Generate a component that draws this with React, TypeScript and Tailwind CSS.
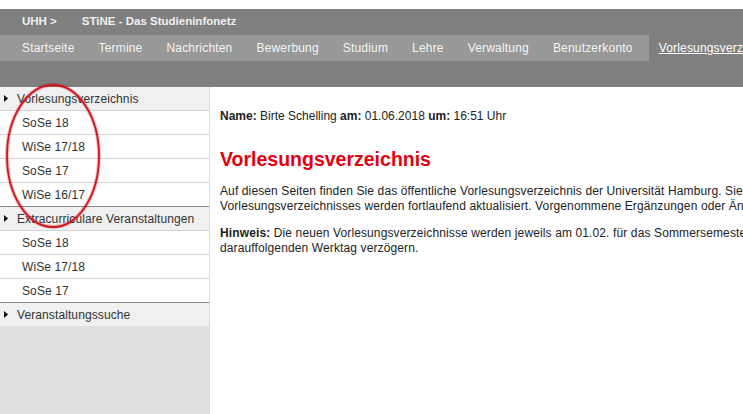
const NAV = [
  "Startseite",
  "Termine",
  "Nachrichten",
  "Bewerbung",
  "Studium",
  "Lehre",
  "Verwaltung",
  "Benutzerkonto",
];

const GROUPS = [
  { label: "Vorlesungsverzeichnis", items: ["SoSe 18", "WiSe 17/18", "SoSe 17", "WiSe 16/17"] },
  { label: "Extracurriculare Veranstaltungen", items: ["SoSe 18", "WiSe 17/18", "SoSe 17"] },
  { label: "Veranstaltungssuche", items: [] as string[] },
];

const Arrow = () => (
  <svg width="4" height="7" viewBox="0 0 4 7" className="shrink-0">
    <polygon points="0,0 4,3.5 0,7" fill="#111" />
  </svg>
);

export default function App() {
  return (
    <div
      className="relative w-full h-[414px] overflow-hidden bg-white flex flex-col text-[12px] text-[#222]"
      style={{ fontFamily: '"Liberation Sans", Arial, sans-serif' }}
    >
      {/* ── Header ─────────────────────────────────────── */}
      <div className="h-[9px] shrink-0 bg-white" />
      <div className="h-[26px] shrink-0 bg-[#808080] flex items-center pl-[22px] text-[11.5px] font-bold text-[#f0f0f0]">
        <span>UHH &gt;</span>
        <span className="ml-[25px]">STiNE - Das Studieninfonetz</span>
      </div>
      <div className="h-[26px] shrink-0 bg-[#808080] flex tracking-[0.18px]">
        <div className="flex bg-[#989898] pl-[10px] pr-[4px]">
          {NAV.map((n) => (
            <span key={n} className="px-3 flex items-center text-[#f4f4f4] whitespace-nowrap">
              {n}
            </span>
          ))}
        </div>
        <span className="ml-[10px] flex items-center text-white underline whitespace-nowrap">
          Vorlesungsverzeichnis
        </span>
      </div>
      <div className="h-[26px] shrink-0 bg-[#808080]" />

      {/* ── Body ───────────────────────────────────────── */}
      <div className="flex flex-1 min-h-0">
        <aside className="w-[210px] shrink-0 flex flex-col border-r border-[#dcdcdc] text-[#333] tracking-[0.1px]">
          {GROUPS.map((g, gi) => (
            <div key={g.label}>
              <div
                className={`flex items-center gap-[9px] pl-[4px] bg-[#f0f0f0] whitespace-nowrap ${
                  gi < GROUPS.length - 1 ? "h-[24px] border-b border-[#d4d4d4]" : "h-[23px]"
                }`}
              >
                <Arrow />
                <span>{g.label}</span>
              </div>
              {g.items.map((it, i) => (
                <div
                  key={it}
                  className={`h-[24px] flex items-center pl-[22px] bg-white border-b ${
                    i === g.items.length - 1 ? "border-[#8c8c8c]" : "border-[#d4d4d4]"
                  }`}
                >
                  {it}
                </div>
              ))}
            </div>
          ))}
          <div className="flex-1 bg-[#e0e0e0]" />
        </aside>

        <main className="flex-1 min-w-0 pl-[10px] pt-[22px] leading-[15px] whitespace-nowrap">
          <p>
            <b>Name:</b> Birte Schelling <b>am:</b> 01.06.2018 <b>um:</b> 16:51 Uhr
          </p>
          <h1 className="mt-[23px] text-[19.5px] leading-[24px] font-bold text-[#e3000f]">
            Vorlesungsverzeichnis
          </h1>
          <p className="mt-[13px] tracking-[0.12px]">
            Auf diesen Seiten finden Sie das öffentliche Vorlesungsverzeichnis der Universität Hamburg. Sie können
            sich hier über das Lehrangebot informieren. Die Inhalte des
            <br />
            Vorlesungsverzeichnisses werden fortlaufend aktualisiert. Vorgenommene Ergänzungen oder Änderungen sind
            sofort sichtbar.
          </p>
          <p className="mt-[12px] tracking-[0.12px]">
            <b>Hinweis:</b> Die neuen Vorlesungsverzeichnisse werden jeweils am 01.02. für das Sommersemester und am
            01.08. für das Wintersemester veröffentlicht. Die Veröffentlichung kann sich auf den
            <br />
            darauffolgenden Werktag verzögern.
          </p>
        </main>
      </div>

      {/* ── Red annotation ellipse ─────────────────────── */}
      <svg
        className="absolute left-0 top-0 pointer-events-none"
        width="120"
        height="240"
        viewBox="0 0 120 240"
      >
        <ellipse cx="53" cy="156" rx="46" ry="71" fill="none" stroke="#b00" strokeOpacity="0.25" strokeWidth="4" />
        <ellipse cx="53" cy="156" rx="46" ry="71" fill="none" stroke="#d3141c" strokeWidth="1.8" />
      </svg>
    </div>
  );
}
